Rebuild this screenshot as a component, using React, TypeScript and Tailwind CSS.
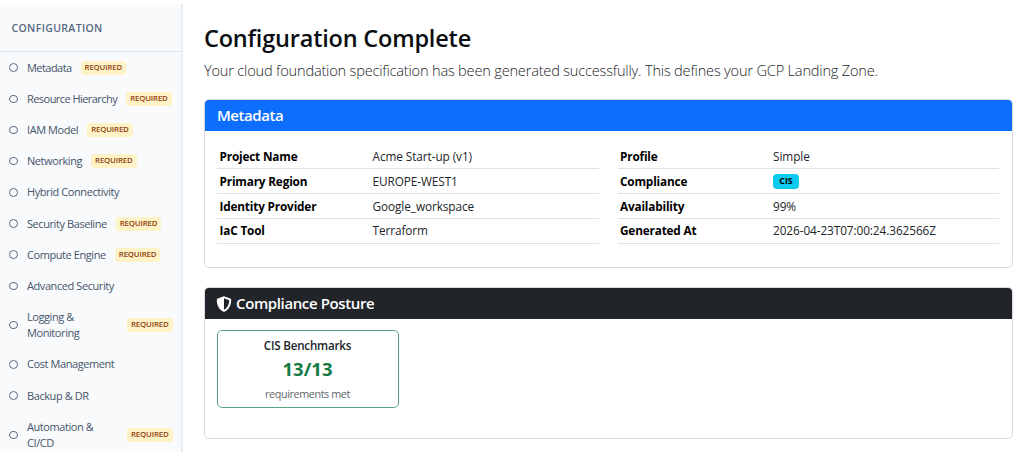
import React from "react";

interface NavItem {
  label: string;
  required?: boolean;
  wrap?: boolean;
  tight?: boolean;
}

interface Field {
  label: string;
  value: string;
  badge?: boolean;
}

const navItems: NavItem[] = [
  { label: "Metadata", required: true, tight: true },
  { label: "Resource Hierarchy", required: true, tight: true },
  { label: "IAM Model", required: true },
  { label: "Networking", required: true },
  { label: "Hybrid Connectivity" },
  { label: "Security Baseline", required: true },
  { label: "Compute Engine", required: true },
  { label: "Advanced Security" },
  { label: "Logging & Monitoring", required: true, wrap: true },
  { label: "Cost Management" },
  { label: "Backup & DR" },
  { label: "Automation & CI/CD", required: true, wrap: true },
];

const leftFields: Field[] = [
  { label: "Project Name", value: "Acme Start-up (v1)" },
  { label: "Primary Region", value: "EUROPE-WEST1" },
  { label: "Identity Provider", value: "Google_workspace" },
  { label: "IaC Tool", value: "Terraform" },
];

const rightFields: Field[] = [
  { label: "Profile", value: "Simple" },
  { label: "Compliance", value: "CIS", badge: true },
  { label: "Availability", value: "99%" },
  { label: "Generated At", value: "2026-04-23T07:00:24.362566Z" },
];

const Sidebar: React.FC = () => (
  <aside className="w-[183px] shrink-0 mt-1 bg-[#f8fafc] border-r-2 border-[#eaeff5]">
    <div className="h-12 pl-[11.5px] pt-[2px] flex items-center border-b border-[#e2e8f0] text-[10.5px] font-semibold tracking-[0.35px] text-[#56677f]">
      CONFIGURATION
    </div>
    <nav>
      {navItems.map((item) => (
        <div
          key={item.label}
          className={`flex items-center pl-[9px] pr-[9px] ${item.wrap ? "h-[47.3px]" : "h-[31.2px]"}`}
        >
          <span className="size-[8.5px] shrink-0 rounded-full border border-[#5b6b82]" />
          <span
            className={`ml-[9.5px] text-[11px] leading-4 text-[#475569] ${item.tight ? "tracking-[-0.55px]" : "tracking-[-0.42px]"} ${item.wrap ? "w-[91px] pr-5 shrink-0" : "whitespace-nowrap"}`}
          >
            {item.label}
          </span>
          {item.required && (
            <span className="ml-[9px] h-[14px] w-[45.5px] shrink-0 flex items-center justify-center rounded-[3px] bg-[#fef3c7] text-[7.8px] font-semibold tracking-[-0.15px] text-[#92400e]">
              REQUIRED
            </span>
          )}
        </div>
      ))}
    </nav>
  </aside>
);

const FieldTable: React.FC<{ fields: Field[] }> = ({ fields }) => (
  <div className="flex-1">
    {fields.map((field) => (
      <div key={field.label} className="flex items-center h-[24.95px] pt-px pl-[2.5px] border-b border-[#dee2e6] text-[11.8px]">
        <span className="w-[153px] font-bold tracking-[-0.18px] text-black">{field.label}</span>
        {field.badge ? (
          <span className="mt-px h-[15px] w-[26px] flex items-center justify-center rounded-[4px] bg-[#0dcaf0] text-[8.8px] font-bold text-black">
            {field.value}
          </span>
        ) : (
          <span className="tracking-[-0.08px] text-[#212529]">{field.value}</span>
        )}
      </div>
    ))}
  </div>
);

const ShieldIcon: React.FC = () => (
  <svg viewBox="0 0 16 16" className="size-[16px] -ml-px shrink-0" fill="#fff">
    <path
      fillRule="evenodd"
      d="M8 0.200 1.700 2.600C1.100 2.850 0.800 3.300 0.800 3.900 0.850 9 3 13.500 7.400 15.650q.6.300 1.200 0C13 13.500 15.150 9 15.200 3.900c0-.6-.3-1.050-.9-1.300zM8 2.300l5.200 2c0 3.800-1.500 7.500-5.200 9.500z"
    />
  </svg>
);

export default function App() {
  return (
    <div className="flex h-[452px] overflow-hidden bg-white font-['Open_Sans','Noto_Sans',sans-serif]">
      <Sidebar />
      <main className="flex-1 pl-[21px] pr-[11px] pt-6">
        <h1 className="h-[30px] flex items-center whitespace-nowrap text-[23.5px] font-semibold tracking-[-0.2px] text-[#0b0d10]">
          Configuration Complete
        </h1>
        <p className="mt-[6px] h-[22px] flex items-center whitespace-nowrap text-[14.6px] font-light tracking-[-0.2px] text-[#212529]">
          Your cloud foundation specification has been generated successfully. This defines your GCP Landing Zone.
        </p>

        <section className="mt-[17px] h-[169px] rounded-[5px] border border-[#d8dadd] overflow-hidden">
          <h2 className="h-[31px] pl-3 flex items-center bg-[#0d6efd] text-[15px] font-semibold tracking-[-0.45px] text-white">
            Metadata
          </h2>
          <div className="flex gap-[19px] pl-3 pr-[13px] pt-[13px]">
            <FieldTable fields={leftFields} />
            <FieldTable fields={rightFields} />
          </div>
        </section>

        <section className="mt-[19px] h-[152px] rounded-[5px] border border-[#d8dadd] overflow-hidden">
          <h2 className="h-[31px] pl-3 flex items-center gap-1 bg-[#212529] text-[15px] font-semibold tracking-[-0.38px] text-white">
            <ShieldIcon />
            Compliance Posture
          </h2>
          <div className="ml-[11.5px] mt-[11px] w-[182px] h-[78px] flex flex-col items-center rounded-[5px] border border-[#5aa584]">
            <div className="mt-[7px] h-4 flex items-center text-[11.6px] font-semibold tracking-[-0.2px] text-[#212529]">
              CIS Benchmarks
            </div>
            <div className="mt-[3px] h-6 flex items-center text-[18.5px] font-bold text-[#147a43]">13/13</div>
            <div className="mt-[5px] h-4 flex items-center text-[10.8px] tracking-[-0.4px] text-[#5f666c]">requirements met</div>
          </div>
        </section>
      </main>
    </div>
  );
}
